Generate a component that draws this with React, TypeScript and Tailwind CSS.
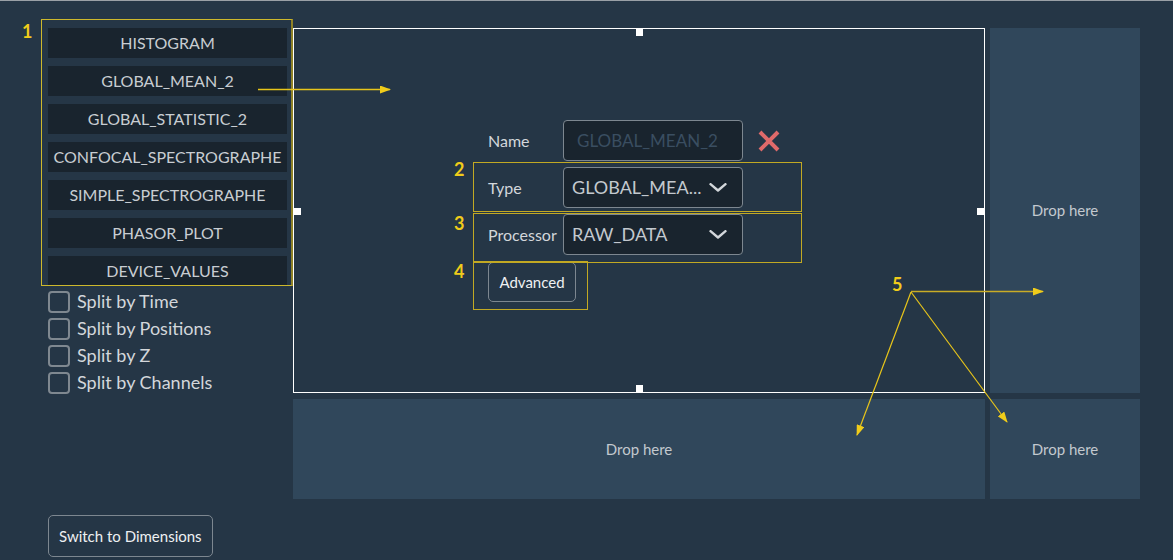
const types = [
  'HISTOGRAM',
  'GLOBAL_MEAN_2',
  'GLOBAL_STATISTIC_2',
  'CONFOCAL_SPECTROGRAPHE',
  'SIMPLE_SPECTROGRAPHE',
  'PHASOR_PLOT',
  'DEVICE_VALUES',
]

const splits = ['Split by Time', 'Split by Positions', 'Split by Z', 'Split by Channels']

function Handle({ className }: { className: string }) {
  return <div className={`absolute w-[7px] h-[7px] bg-white ${className}`} />
}

function Chevron() {
  return (
    <svg width="18" height="9" viewBox="0 0 18 9" fill="none">
      <path d="M1.5 1.2 L9 7.5 L16.5 1.2" stroke="#d3d7db" strokeWidth="2.4" strokeLinecap="round" strokeLinejoin="round" />
    </svg>
  )
}

function Select({ value }: { value: string }) {
  return (
    <div className="h-[41px] w-[180px] rounded-[4px] border border-[#7d8790] bg-[#19242e] flex items-center justify-between pl-[8px] pr-[15px]">
      <span className="text-[18px] text-[#c3c9cf] whitespace-nowrap">{value}</span>
      <Chevron />
    </div>
  )
}

export default function App() {
  return (
    <div
      className="relative w-full h-[560px] bg-[#253646] border-t border-[#9aa0a6] overflow-hidden text-[#d0d4d8]"
      style={{ fontFamily: 'Lato, "Open Sans", sans-serif' }}
    >
      <div className="flex h-full">
        {/* left column */}
        <div className="w-[293px] shrink-0 pl-[41px] pt-[18px] flex flex-col">
          <div className="w-[252px] h-[267px] border border-[#cdb82c] border-r-2 border-r-[#8f8226] pl-[6px] pr-[4px] pt-[8px] flex flex-col gap-[8px] overflow-hidden">
            {types.map((t) => (
              <div
                key={t}
                className="h-[30px] shrink-0 bg-[#19242e] flex items-center justify-center text-[16px] text-[#c8cdd2] whitespace-nowrap"
              >
                {t}
              </div>
            ))}
          </div>
          <div className="pl-[7px] pt-[2px] flex flex-col">
            {splits.map((s) => (
              <label key={s} className="h-[27px] flex items-center gap-[7px]">
                <span className="w-[22px] h-[22px] rounded-[4px] border-2 border-[#7f8890] bg-[#253646]" />
                <span className="text-[18px] text-[#d3d7db]">{s}</span>
              </label>
            ))}
          </div>
          <div className="mt-auto mb-[3px] pl-[7px]">
            <button className="h-[42px] px-[10px] rounded-[5px] border border-[#7d8790] text-[15px] text-[#eef0f2]">
              Switch to Dimensions
            </button>
          </div>
        </div>

        {/* main area */}
        <div className="pt-[27px] flex flex-col gap-[6px]">
          <div className="flex gap-[5px]">
            <div className="relative w-[692px] h-[365px] border border-white">
              <Handle className="top-0 left-[342px]" />
              <Handle className="bottom-0 left-[342px]" />
              <Handle className="left-0 top-[179px]" />
              <Handle className="right-0 top-[179px]" />
              <div className="pl-[194px] pt-[91px] flex flex-col gap-[6px]">
                <div className="flex items-center">
                  <span className="w-[75px] text-[16px] text-[#d3d7db]">Name</span>
                  <div className="h-[41px] w-[180px] rounded-[4px] border border-[#7d8790] bg-[#19242e] flex items-center pl-[13px]">
                    <span className="text-[17px] text-[#3a4e61]">GLOBAL_MEAN_2</span>
                  </div>
                  <svg className="ml-[14px]" width="24" height="24" viewBox="0 0 24 24">
                    <path d="M3 3 L21 21 M21 3 L3 21" stroke="#e06a6a" strokeWidth="4" strokeLinecap="butt" />
                  </svg>
                </div>
                <div className="flex items-center">
                  <span className="w-[75px] text-[16px] text-[#d3d7db]">Type</span>
                  <Select value="GLOBAL_MEA..." />
                </div>
                <div className="flex items-center">
                  <span className="w-[75px] text-[16px] text-[#d3d7db]">Processor</span>
                  <Select value="RAW_DATA" />
                </div>
                <div className="pt-[1px]">
                  <button className="h-[40px] w-[88px] rounded-[5px] border border-[#7d8790] text-[15px] text-[#eef0f2]">
                    Advanced
                  </button>
                </div>
              </div>
            </div>
            <div className="w-[150px] h-[365px] bg-[#30475b] flex items-center justify-center text-[15px] text-[#c3c9cf]">
              Drop here
            </div>
          </div>
          <div className="flex gap-[5px]">
            <div className="w-[692px] h-[100px] bg-[#30475b] flex items-center justify-center text-[15px] text-[#c3c9cf]">
              Drop here
            </div>
            <div className="w-[150px] h-[100px] bg-[#30475b] flex items-center justify-center text-[15px] text-[#c3c9cf]">
              Drop here
            </div>
          </div>
        </div>
      </div>

      {/* annotations */}
      <div className="absolute left-[22px] top-[17px] text-[18px] font-bold text-[#f0cc1a]">1</div>
      <div className="absolute left-[454px] top-[155px] text-[18px] font-bold text-[#f0cc1a]">2</div>
      <div className="absolute left-[454px] top-[209px] text-[18px] font-bold text-[#f0cc1a]">3</div>
      <div className="absolute left-[454px] top-[257px] text-[18px] font-bold text-[#f0cc1a]">4</div>
      <div className="absolute left-[892px] top-[270px] text-[18px] font-bold text-[#f0cc1a]">5</div>
      <div className="absolute left-[473px] top-[161px] w-[329px] h-[50px] border border-[#c2a923]" />
      <div className="absolute left-[473px] top-[212px] w-[329px] h-[50px] border border-[#c2a923]" />
      <div className="absolute left-[473px] top-[260px] w-[115px] h-[49px] border border-[#c2a923]" />
      <svg className="absolute inset-0 pointer-events-none" width="1173" height="560">
        <defs>
          <marker id="ah" markerWidth="11" markerHeight="8" refX="10" refY="4" orient="auto" markerUnits="userSpaceOnUse">
            <path d="M0 0 L11 4 L0 8 Z" fill="#f0cc1a" />
          </marker>
        </defs>
        <line x1="258" y1="88.5" x2="390" y2="88.5" stroke="#e8c51a" strokeWidth="1.3" markerEnd="url(#ah)" />
        <line x1="911" y1="290.5" x2="1043" y2="290.5" stroke="#c9ac26" strokeWidth="1.5" markerEnd="url(#ah)" />
        <line x1="911" y1="291" x2="857" y2="434" stroke="#e8c51a" strokeWidth="1.2" markerEnd="url(#ah)" />
        <line x1="911" y1="291" x2="1007" y2="421" stroke="#e8c51a" strokeWidth="1.2" markerEnd="url(#ah)" />
      </svg>
    </div>
  )
}
